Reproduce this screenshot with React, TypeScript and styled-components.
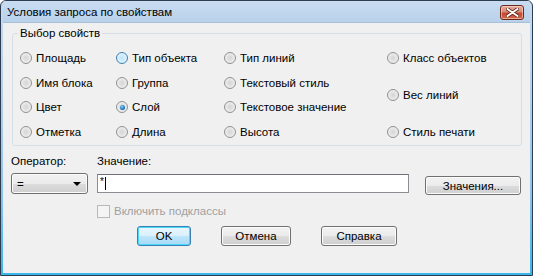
import React from 'react';
import styled, { createGlobalStyle, css } from 'styled-components';

const GlobalStyle = createGlobalStyle`
  html, body {
    margin: 0;
    padding: 0;
    background: #ffffff;
  }
  body {
    font-family: "Liberation Sans", Arial, sans-serif;
    font-size: 11.5px;
    color: #000;
  }
`;

type RadioState = 'normal' | 'hover' | 'checked';

const columns: { label: string; state?: RadioState }[][] = [
  [{ label: 'Площадь' }, { label: 'Имя блока' }, { label: 'Цвет' }, { label: 'Отметка' }],
  [{ label: 'Тип объекта', state: 'hover' }, { label: 'Группа' }, { label: 'Слой', state: 'checked' }, { label: 'Длина' }],
  [{ label: 'Тип линий' }, { label: 'Текстовый стиль' }, { label: 'Текстовое значение' }, { label: 'Высота' }],
];

const lastColumn = ['Класс объектов', 'Вес линий', 'Стиль печати'];

function Radio({ label, state = 'normal' }: { label: string; state?: RadioState }) {
  return (
    <RadioRow>
      <RadioCircle $state={state} />
      <span>{label}</span>
    </RadioRow>
  );
}

export default function App() {
  return (
    <>
      <GlobalStyle />
      <Window>
        <TitleBar>
          <Title>Условия запроса по свойствам</Title>
          <CloseButton>
            <svg width="13" height="9" viewBox="0 0 13 9">
              <path d="M1.5 1 L11.5 8 M11.5 1 L1.5 8" stroke="#5a1d12" strokeWidth="3.4" strokeLinecap="round" />
              <path d="M1.5 1 L11.5 8 M11.5 1 L1.5 8" stroke="#ffffff" strokeWidth="2" strokeLinecap="round" />
            </svg>
          </CloseButton>
        </TitleBar>
        <Content>
          <Group>
            <Legend>Выбор свойств</Legend>
            <RadioColumns>
              {columns.map((col, i) => (
                <RadioColumn key={i} $width={[96, 108, 163][i]}>
                  {col.map((r) => (
                    <Radio key={r.label} label={r.label} state={r.state} />
                  ))}
                </RadioColumn>
              ))}
              <SpreadColumn>
                {lastColumn.map((l) => (
                  <Radio key={l} label={l} />
                ))}
              </SpreadColumn>
            </RadioColumns>
          </Group>

          <FieldsRow>
            <FieldCol $width={77}>
              <FieldLabel>Оператор:</FieldLabel>
              <Select>
                <span>=</span>
                <Arrow />
              </Select>
            </FieldCol>
            <FieldCol $width={312} $gap={9}>
              <FieldLabel>Значение:</FieldLabel>
              <TextBox>
                <Star>*</Star>
                <Caret />
              </TextBox>
            </FieldCol>
            <FieldCol $width={96} $gap={16}>
              <Button $width={96} $height={19} $top={23}>Значения...</Button>
            </FieldCol>
          </FieldsRow>

          <CheckRow>
            <CheckBox />
            <span>Включить подклассы</span>
          </CheckRow>

          <ButtonsRow>
            <Button $width={54} $default>OK</Button>
            <Button $width={70}>Отмена</Button>
            <Button $width={76}>Справка</Button>
          </ButtonsRow>
        </Content>
      </Window>
    </>
  );
}

const Window = styled.div`
  width: 533px;
  height: 276px;
  box-sizing: border-box;
  border: 1px solid #2d3c4e;
  border-radius: 6px 6px 0 0;
  background: linear-gradient(to bottom, #c6daf0 0%, #bcd3ec 25%, #8fc2e8 70%, #38b6ea 100%);
  padding: 0 2px 2px 2px;
  display: flex;
  flex-direction: column;
  overflow: hidden;
`;

const TitleBar = styled.div`
  height: 21px;
  display: flex;
  align-items: flex-start;
  padding-left: 4px;
  background: linear-gradient(to bottom, #c9dcf1, #b9d1ea);
`;

const Title = styled.div`
  margin-top: 4px;
  font-size: 11.5px;
  line-height: 15px;
  color: #000;
`;

const CloseButton = styled.div`
  margin-left: auto;
  margin-right: 6px;
  margin-top: 4px;
  width: 24px;
  height: 15px;
  box-sizing: border-box;
  border: 1px solid #6d2a1c;
  border-radius: 3px;
  background: linear-gradient(to bottom, #e5ab9d 0%, #d88c79 45%, #c4462d 55%, #d26a4c 100%);
  box-shadow: inset 0 0 0 1px rgba(255, 220, 210, 0.55);
  display: flex;
  align-items: center;
  justify-content: center;
`;

const Content = styled.div`
  flex: 1;
  background: #f0f0f0;
  border-top: 1px solid #a9c0d9;
  display: flex;
  flex-direction: column;
`;

const Group = styled.fieldset`
  margin: 3px 0 0 9px;
  width: 510px;
  height: 120px;
  box-sizing: border-box;
  border: 1px solid #d5dfe5;
  border-radius: 3px;
  padding: 0 0 0 7px;
  min-width: 0;
`;

const Legend = styled.legend`
  padding: 0 2px;
  margin-left: -2px;
  line-height: 14px;
  font-size: 11.5px;
`;

const RadioColumns = styled.div`
  display: flex;
  margin-top: 9px;
  height: 92px;
`;

const RadioColumn = styled.div<{ $width: number }>`
  width: ${(p) => p.$width}px;
  display: flex;
  flex-direction: column;
  gap: 6.5px;
`;

const SpreadColumn = styled.div`
  display: flex;
  flex-direction: column;
  justify-content: space-between;
`;

const RadioRow = styled.div`
  height: 18px;
  display: flex;
  align-items: center;
  gap: 4px;
  white-space: nowrap;
`;

const RadioCircle = styled.span<{ $state: RadioState }>`
  width: 12px;
  height: 12px;
  box-sizing: border-box;
  border-radius: 50%;
  border: 1px solid #8f9090;
  background: radial-gradient(circle at 50% 50%, #d4d4d4 0%, #e4e4e4 45%, #fbfbfb 100%);
  position: relative;
  flex: none;
  ${(p) =>
    p.$state === 'hover' &&
    css`
      border-color: #3c7fb1;
      background: radial-gradient(circle at 50% 50%, #bfe3f8 0%, #d6eefc 50%, #f0f9fe 100%);
    `}
  ${(p) =>
    p.$state === 'checked' &&
    css`
      &::after {
        content: '';
        position: absolute;
        left: 2.5px;
        top: 2.5px;
        width: 5px;
        height: 5px;
        border-radius: 50%;
        background: radial-gradient(circle at 40% 35%, #8fd3ff 0%, #2f8ad0 45%, #0b3e6e 100%);
      }
    `}
`;

const FieldsRow = styled.div`
  display: flex;
  align-items: flex-start;
  margin: 7px 0 0 8px;
`;

const FieldCol = styled.div<{ $width: number; $gap?: number }>`
  width: ${(p) => p.$width}px;
  margin-left: ${(p) => p.$gap ?? 0}px;
  display: flex;
  flex-direction: column;
`;

const FieldLabel = styled.div`
  line-height: 16px;
  height: 16px;
`;

const Select = styled.div`
  margin-top: 4px;
  height: 21px;
  box-sizing: border-box;
  border: 1px solid #707070;
  border-radius: 3px;
  background: linear-gradient(to bottom, #f2f2f2 0%, #ebebeb 50%, #dddddd 50%, #cfcfcf 100%);
  box-shadow: inset 0 0 0 1px #fbfbfb;
  display: flex;
  align-items: center;
  padding: 0 6px 0 5px;
`;

const Arrow = styled.span`
  margin-left: auto;
  width: 0;
  height: 0;
  border-left: 4px solid transparent;
  border-right: 4px solid transparent;
  border-top: 4px solid #000;
`;

const TextBox = styled.div`
  margin-top: 5px;
  height: 19px;
  box-sizing: border-box;
  border: 1px solid #8a8d92;
  border-top-color: #6d7076;
  background: #ffffff;
  display: flex;
  align-items: center;
  padding-left: 2px;
`;

const Star = styled.span`
  font-size: 10px;
  line-height: 10px;
  align-self: flex-start;
  margin-top: 2px;
`;

const Caret = styled.span`
  width: 1px;
  height: 13px;
  background: #000;
  margin-left: 1px;
`;

const Button = styled.div<{ $width: number; $height?: number; $top?: number; $default?: boolean }>`
  width: ${(p) => p.$width}px;
  height: ${(p) => p.$height ?? 20}px;
  margin-top: ${(p) => p.$top ?? 0}px;
  box-sizing: border-box;
  border: 1px solid #707070;
  border-radius: 3px;
  background: linear-gradient(to bottom, #f2f2f2 0%, #ebebeb 50%, #dddddd 50%, #cfcfcf 100%);
  box-shadow: inset 0 0 0 1px #fcfcfc;
  display: flex;
  align-items: center;
  justify-content: center;
  ${(p) =>
    p.$default &&
    css`
      border-color: #3c7fb1;
      background: linear-gradient(to bottom, #eaf6fd 0%, #d9f0fc 50%, #bee6fd 50%, #a7d9f5 100%);
      box-shadow: inset 0 0 0 1px #48d8fb;
    `}
`;

const CheckRow = styled.div`
  display: flex;
  align-items: center;
  gap: 4px;
  height: 16px;
  margin: 8px 0 0 94px;
  color: #a0a0a0;
`;

const CheckBox = styled.span`
  width: 13px;
  height: 13px;
  box-sizing: border-box;
  border: 1px solid #b8b8b8;
  background: #f4f4f4;
`;

const ButtonsRow = styled.div`
  display: flex;
  gap: 30px;
  margin: 7px 0 0 134px;
`;
